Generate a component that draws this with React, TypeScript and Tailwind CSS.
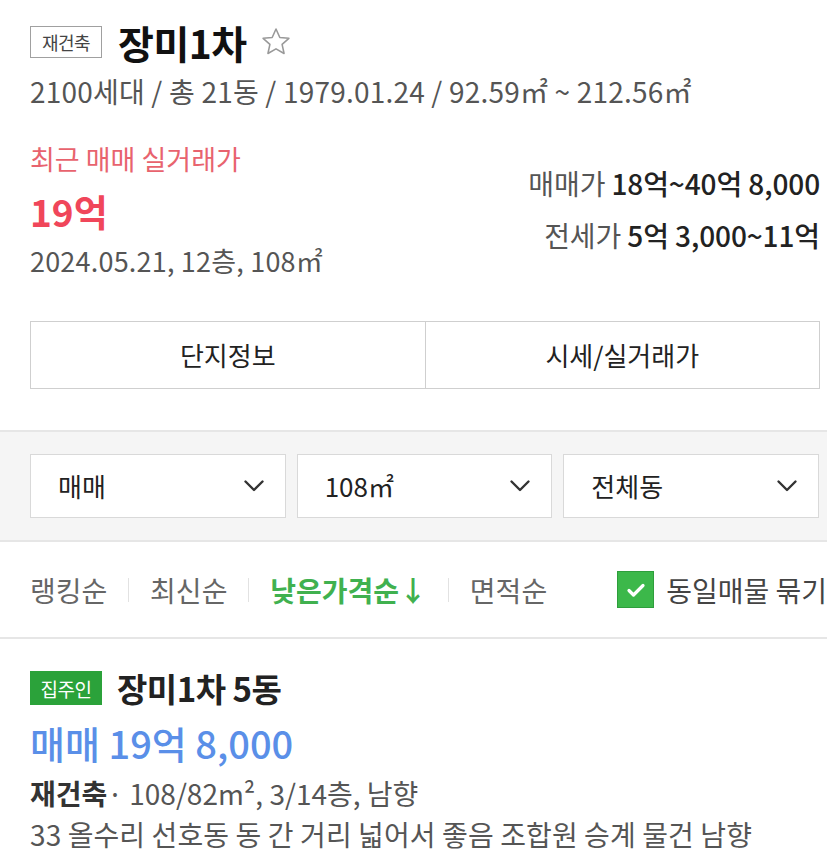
import React from 'react'

const font = { fontFamily: '"Noto Sans CJK KR", "Noto Sans", sans-serif' }

function Chevron() {
  return (
    <svg width="22" height="14" viewBox="0 0 22 14" fill="none">
      <path d="M2.5 2.5l8.5 8.5 8.5-8.5" stroke="#333" strokeWidth="2.4" strokeLinecap="round" strokeLinejoin="round" />
    </svg>
  )
}

function SelectBox({ label }: { label: string }) {
  return (
    <div className="flex-1 h-[64px] bg-white border border-[#d9d9d9] flex items-center justify-between pl-[27px] pr-[20px]">
      <span className="text-[26px] leading-none text-[#222]">{label}</span>
      <Chevron />
    </div>
  )
}

function Divider() {
  return <span className="w-px h-[24px] bg-[#e2e2e2] mx-[21px]" />
}

export default function App() {
  return (
    <div className="w-[827px] h-[860px] bg-white overflow-hidden" style={font}>
      {/* header */}
      <div className="pl-[30px] pr-[7px] pt-[20px]">
        <div className="flex items-center h-[44px]">
          <span className="w-[72px] h-[32px] border border-[#a0a0a0] flex items-center justify-center text-[18px] leading-none text-[#444] tracking-[-0.5px]">재건축</span>
          <span className="ml-[16px] text-[39px] font-bold text-[#111] tracking-[-0.5px] leading-none">장미1차</span>
          <svg className="ml-[12px]" width="34" height="34" viewBox="0 0 24 24" fill="none">
            <path d="M12 2.8l2.7 6 6.4.6-4.8 4.3 1.4 6.4L12 16.8l-5.7 3.3 1.4-6.4-4.8-4.3 6.4-.6z" stroke="#999" strokeWidth="1.1" strokeLinejoin="round" />
          </svg>
        </div>
        <div className="mt-[13px] text-[28px] text-[#555] leading-none tracking-[0.2px] whitespace-nowrap">
          2100세대 / 총 21동 / 1979.01.24 / 92.59㎡ ~ 212.56㎡
        </div>

        <div className="flex justify-between mt-[40px]">
          <div>
            <div className="text-[27px] text-[#e8636e] leading-none">최근 매매 실거래가</div>
            <div className="mt-[21px] text-[37px] font-bold text-[#f0465a] leading-none">19억</div>
            <div className="mt-[17px] text-[27px] text-[#555] leading-none tracking-[0.2px]">2024.05.21, 12층, 108㎡</div>
          </div>
          <div className="flex flex-col items-end pt-[24px]">
            <div className="text-[28px] leading-none tracking-[-0.1px] whitespace-nowrap">
              <span className="text-[#555]">매매가 </span>
              <span className="text-[#222] font-medium">18억~40억 8,000</span>
            </div>
            <div className="mt-[24px] text-[28px] leading-none tracking-[-0.1px] whitespace-nowrap">
              <span className="text-[#555]">전세가 </span>
              <span className="text-[#222] font-medium">5억 3,000~11억</span>
            </div>
          </div>
        </div>

        <div className="mt-[47px] flex h-[68px] border border-[#cfcfcf]">
          <div className="flex-1 flex items-center justify-center text-[26px] leading-none text-[#222] border-r border-[#cfcfcf]">단지정보</div>
          <div className="flex-1 flex items-center justify-center text-[26px] leading-none text-[#222]">시세/실거래가</div>
        </div>
      </div>

      {/* filter */}
      <div className="mt-[41px] bg-[#f5f5f5] border-t-2 border-[#e6e6e6] pt-[22px] pb-[22px] pl-[30px] pr-[8px]">
        <div className="flex gap-[11px]">
          <SelectBox label="매매" />
          <SelectBox label="108㎡" />
          <SelectBox label="전체동" />
        </div>
      </div>

      {/* sort */}
      <div className="h-[99px] border-t-2 border-b-2 border-[#e6e6e6] flex items-center pl-[30px] text-[28px] leading-none whitespace-nowrap">
        <span className="text-[#666]">랭킹순</span>
        <Divider />
        <span className="text-[#666]">최신순</span>
        <Divider />
        <span className="text-[#40b14f] font-bold">낮은가격순↓</span>
        <Divider />
        <span className="text-[#666]">면적순</span>
        <div className="ml-[70px] flex items-center shrink-0">
          <span className="w-[37px] h-[37px] bg-[#3cb84a] border border-[#2e9e3c] flex items-center justify-center">
            <svg width="24" height="24" viewBox="0 0 24 24" fill="none">
              <path d="M5 12.5l4.5 4.5L19 7.5" stroke="#fff" strokeWidth="3.2" strokeLinecap="round" strokeLinejoin="round" />
            </svg>
          </span>
          <span className="ml-[12px] text-[#444]">동일매물 묶기</span>
        </div>
      </div>

      {/* listing */}
      <div className="pl-[30px] pt-[32px]">
        <div className="flex items-center h-[34px]">
          <span className="w-[72px] h-[34px] bg-[#2ba23a] text-white text-[19px] leading-none flex items-center justify-center tracking-[-0.5px]">집주인</span>
          <span className="ml-[15px] text-[33px] font-bold text-[#222] leading-none tracking-[-0.5px]">장미1차 5동</span>
        </div>
        <div className="mt-[19px] text-[38px] text-[#5a8fe8] font-medium leading-none">매매 19억 8,000</div>
        <div className="mt-[17px] text-[28px] text-[#555] leading-none whitespace-nowrap">
          <span className="font-bold text-[#333]">재건축</span>· 108/82m², 3/14층, 남향
        </div>
        <div className="mt-[13px] text-[28px] text-[#555] leading-none tracking-[0.1px] whitespace-nowrap">
          33 올수리 선호동 동 간 거리 넓어서 좋음 조합원 승계 물건 남향
        </div>
      </div>
    </div>
  )
}
